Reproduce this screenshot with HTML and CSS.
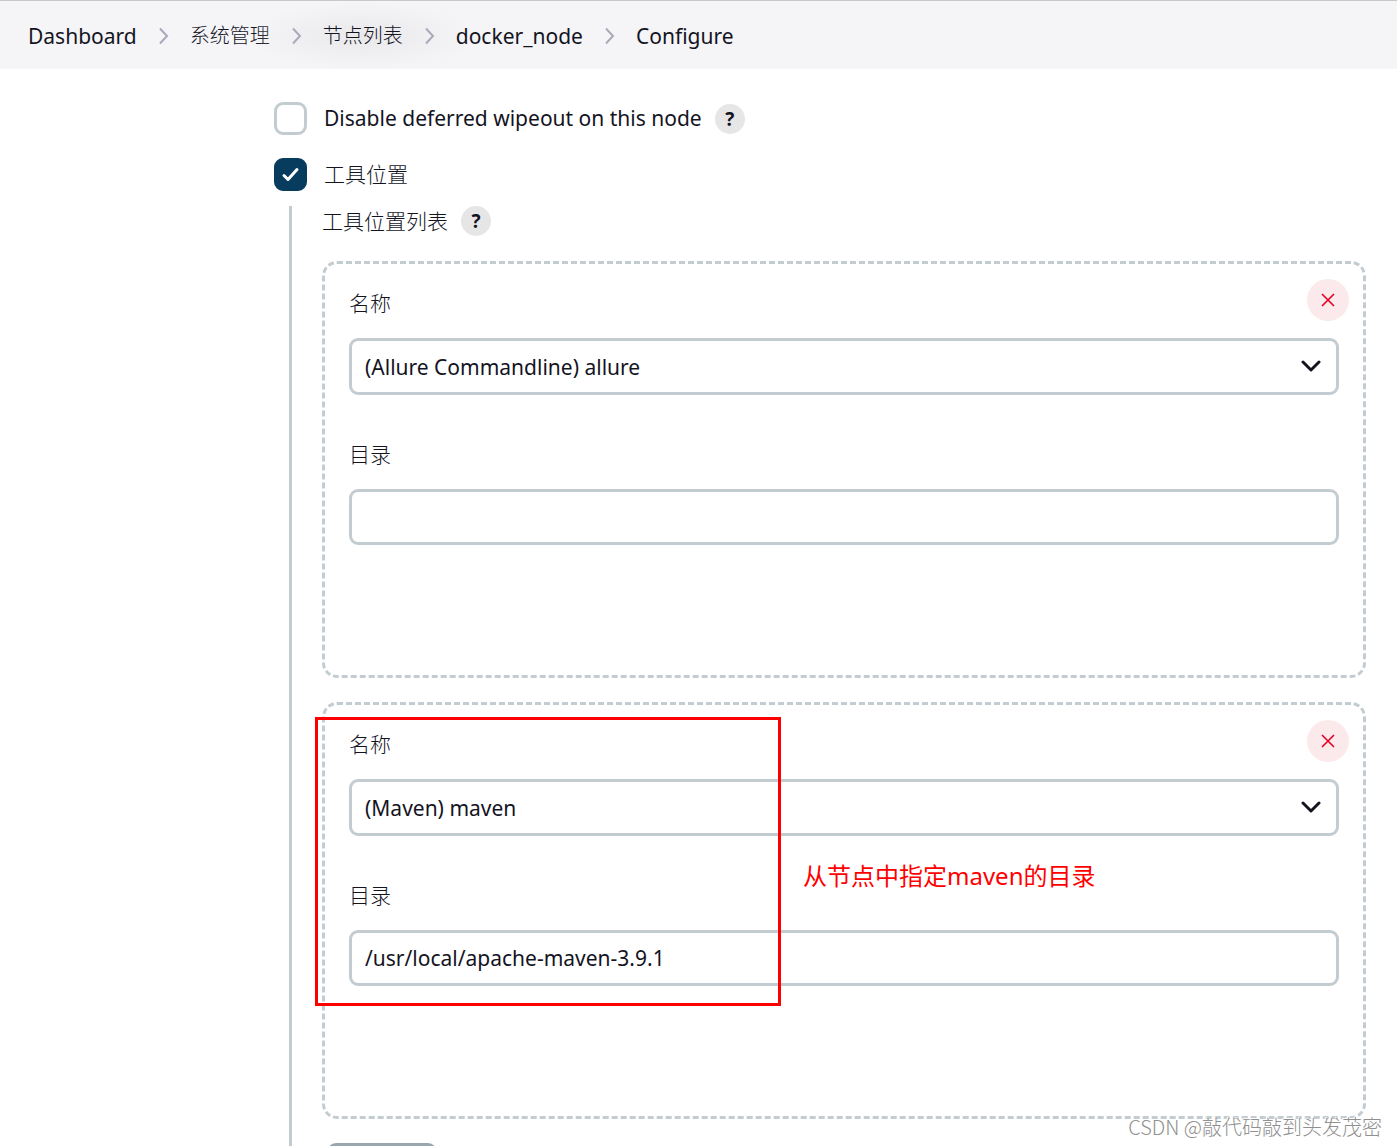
FILE: index.html
```html
<!DOCTYPE html>
<html lang="zh-CN">
<head>
<meta charset="utf-8">
<meta name="viewport" content="width=device-width, initial-scale=1">
<title>docker_node Configure</title>
<link rel="stylesheet" href="styles.css">
</head>
<body>
<div class="page">
  <nav class="breadcrumbs">
    <a href="#">Dashboard</a>
    <svg class="separator" viewBox="0 0 11 18"><path d="M2 1.500 9 9l-7 7.500"/></svg>
    <a href="#" class="zh">系统管理</a>
    <svg class="separator" viewBox="0 0 11 18"><path d="M2 1.500 9 9l-7 7.500"/></svg>
    <a href="#" class="zh hovered">节点列表</a>
    <svg class="separator" viewBox="0 0 11 18"><path d="M2 1.500 9 9l-7 7.500"/></svg>
    <a href="#">docker_node</a>
    <svg class="separator" viewBox="0 0 11 18"><path d="M2 1.500 9 9l-7 7.500"/></svg>
    <a href="#">Configure</a>
  </nav>

  <main class="form">
    <div class="option">
      <input type="checkbox" id="wipeout" class="checkbox">
      <label for="wipeout">Disable deferred wipeout on this node</label>
      <button type="button" class="help">?</button>
    </div>
    <div class="option">
      <span class="check">
        <input type="checkbox" id="tools" class="checkbox" checked>
        <svg class="tick" viewBox="0 0 33 33"><path d="M10 17.500l4 4 9-10"/></svg>
      </span>
      <label for="tools" class="zh">工具位置</label>
    </div>

    <section class="nested">
      <div class="list-title">
        <span class="zh">工具位置列表</span>
        <button type="button" class="help">?</button>
      </div>

      <div class="card">
        <button type="button" class="remove" aria-label="删除"><svg viewBox="0 0 14 14"><path d="M1 1l12 12M13 1L1 13"/></svg></button>
        <label for="name1" class="zh">名称</label>
        <div class="select">
          <select id="name1"><option>(Allure Commandline) allure</option></select>
          <svg viewBox="0 0 20 12"><path d="M2 2l8 8 8-8"/></svg>
        </div>
        <label for="home1" class="zh">目录</label>
        <input type="text" id="home1" class="textbox">
      </div>

      <div class="card">
        <button type="button" class="remove" aria-label="删除"><svg viewBox="0 0 14 14"><path d="M1 1l12 12M13 1L1 13"/></svg></button>
        <label for="name2" class="zh">名称</label>
        <div class="select">
          <select id="name2"><option>(Maven) maven</option></select>
          <svg viewBox="0 0 20 12"><path d="M2 2l8 8 8-8"/></svg>
        </div>
        <label for="home2" class="zh">目录</label>
        <input type="text" id="home2" class="textbox" value="/usr/local/apache-maven-3.9.1">
        <div class="highlight"></div>
        <p class="note">从节点中指定maven的目录</p>
      </div>

      <button type="button" class="add" aria-label="新增"></button>
    </section>
  </main>
  <div class="watermark">CSDN @敲代码敲到头发茂密</div>
</div>
</body>
</html>
```
FILE: styles.css
```css
* {
  box-sizing: border-box;
}

body {
  margin: 0;
  background: #fff;
  color: #14141f;
  font: 21px/32px "Noto Sans", "Noto Sans CJK SC", sans-serif;
}

button,
input,
select {
  margin: 0;
  font: inherit;
  color: inherit;
}

.zh {
  font-weight: 300;
}

.page {
  position: relative;
  height: 100vh;
  overflow: hidden;
}

.breadcrumbs {
  display: flex;
  align-items: center;
  gap: 21px;
  height: 69px;
  padding: 2px 28px 0;
  border-top: 1px solid #c8c8cc;
  background: #f5f5f8;
}

.breadcrumbs a {
  position: relative;
  color: inherit;
  text-decoration: none;
}

.breadcrumbs .zh {
  font-size: 20px;
}

.breadcrumbs .hovered {
  margin: 0 -75px;
  padding: 18px 75px;
  background: radial-gradient(closest-side, #e9e9ec, #f5f5f800);
}

.separator {
  position: relative;
  width: 11px;
  height: 18px;
  fill: none;
  stroke: #a9a9ba;
  stroke-width: 2;
  z-index: 1;
}

.form {
  padding: 33px 31px 0 274px;
}

.option {
  display: flex;
  align-items: center;
  height: 33px;
  margin-bottom: 23px;
}

.option label {
  margin: 0 0 2px 17px;
}

.check {
  position: relative;
  height: 33px;
}

.checkbox {
  display: block;
  width: 33px;
  height: 33px;
  appearance: none;
  border: 3px solid #c3ccd1;
  border-radius: 9px;
  background: #fff;
}

.checkbox:checked {
  border-color: #073c5e;
  background: #073c5e;
}

.tick {
  position: absolute;
  inset: 0;
  fill: none;
  stroke: #fff;
  stroke-width: 3;
  stroke-linecap: round;
  stroke-linejoin: round;
  pointer-events: none;
}

.help {
  width: 30px;
  height: 30px;
  margin-left: 13px;
  padding: 0;
  border: 0;
  border-radius: 50%;
  background: #e6e6e6;
  font-size: 19px;
  font-weight: 700;
  line-height: 30px;
}

.nested {
  margin: -8px 0 0 15px;
  padding-left: 30px;
  border-left: 3px solid #c3ccd1;
}

.list-title {
  display: flex;
  align-items: center;
  height: 30px;
  margin-bottom: 25px;
}

.card {
  position: relative;
  display: flex;
  flex-direction: column;
  margin-bottom: 24px;
  padding: 23px 24px 130px;
  border: 3px dashed #c3ccd1;
  border-radius: 15px;
}

.card label {
  align-self: flex-start;
  margin-bottom: 19px;
}

.select {
  position: relative;
  margin-bottom: 43px;
}

.select select,
.textbox {
  display: block;
  width: 100%;
  height: 56px;
  padding: 0 13px;
  appearance: none;
  border: 3px solid #c3ccd1;
  border-radius: 9px;
  background: #fff;
}

.select select {
  height: 57px;
}

.select svg {
  position: absolute;
  top: 22px;
  right: 18px;
  width: 20px;
  height: 12px;
  fill: none;
  stroke: #14141f;
  stroke-width: 3;
  stroke-linecap: round;
  stroke-linejoin: round;
  pointer-events: none;
}

.remove {
  position: absolute;
  top: 15px;
  right: 14px;
  display: grid;
  place-items: center;
  width: 42px;
  height: 42px;
  padding: 0;
  border: 0;
  border-radius: 50%;
  background: #fce9ec;
}

.remove svg {
  width: 14px;
  height: 14px;
  stroke: #e6001f;
  stroke-width: 1.6;
}

.highlight {
  position: absolute;
  top: 12px;
  left: -10px;
  width: 466px;
  height: 289px;
  border: 3px solid #f00;
  pointer-events: none;
}

.note {
  position: absolute;
  top: 155px;
  left: 478px;
  margin: 0;
  color: #f00;
  font-size: 24px;
}

.add {
  display: block;
  width: 110px;
  height: 50px;
  margin-left: 5px;
  border: 0;
  border-radius: 9px;
  background: #98a6af;
}

.watermark {
  position: absolute;
  right: 15px;
  bottom: 3px;
  color: #909090;
  font-family: "Noto Sans CJK SC", sans-serif;
  font-size: 20px;
  font-weight: 300;
  text-shadow: -1px -1px #fff;
}
```
